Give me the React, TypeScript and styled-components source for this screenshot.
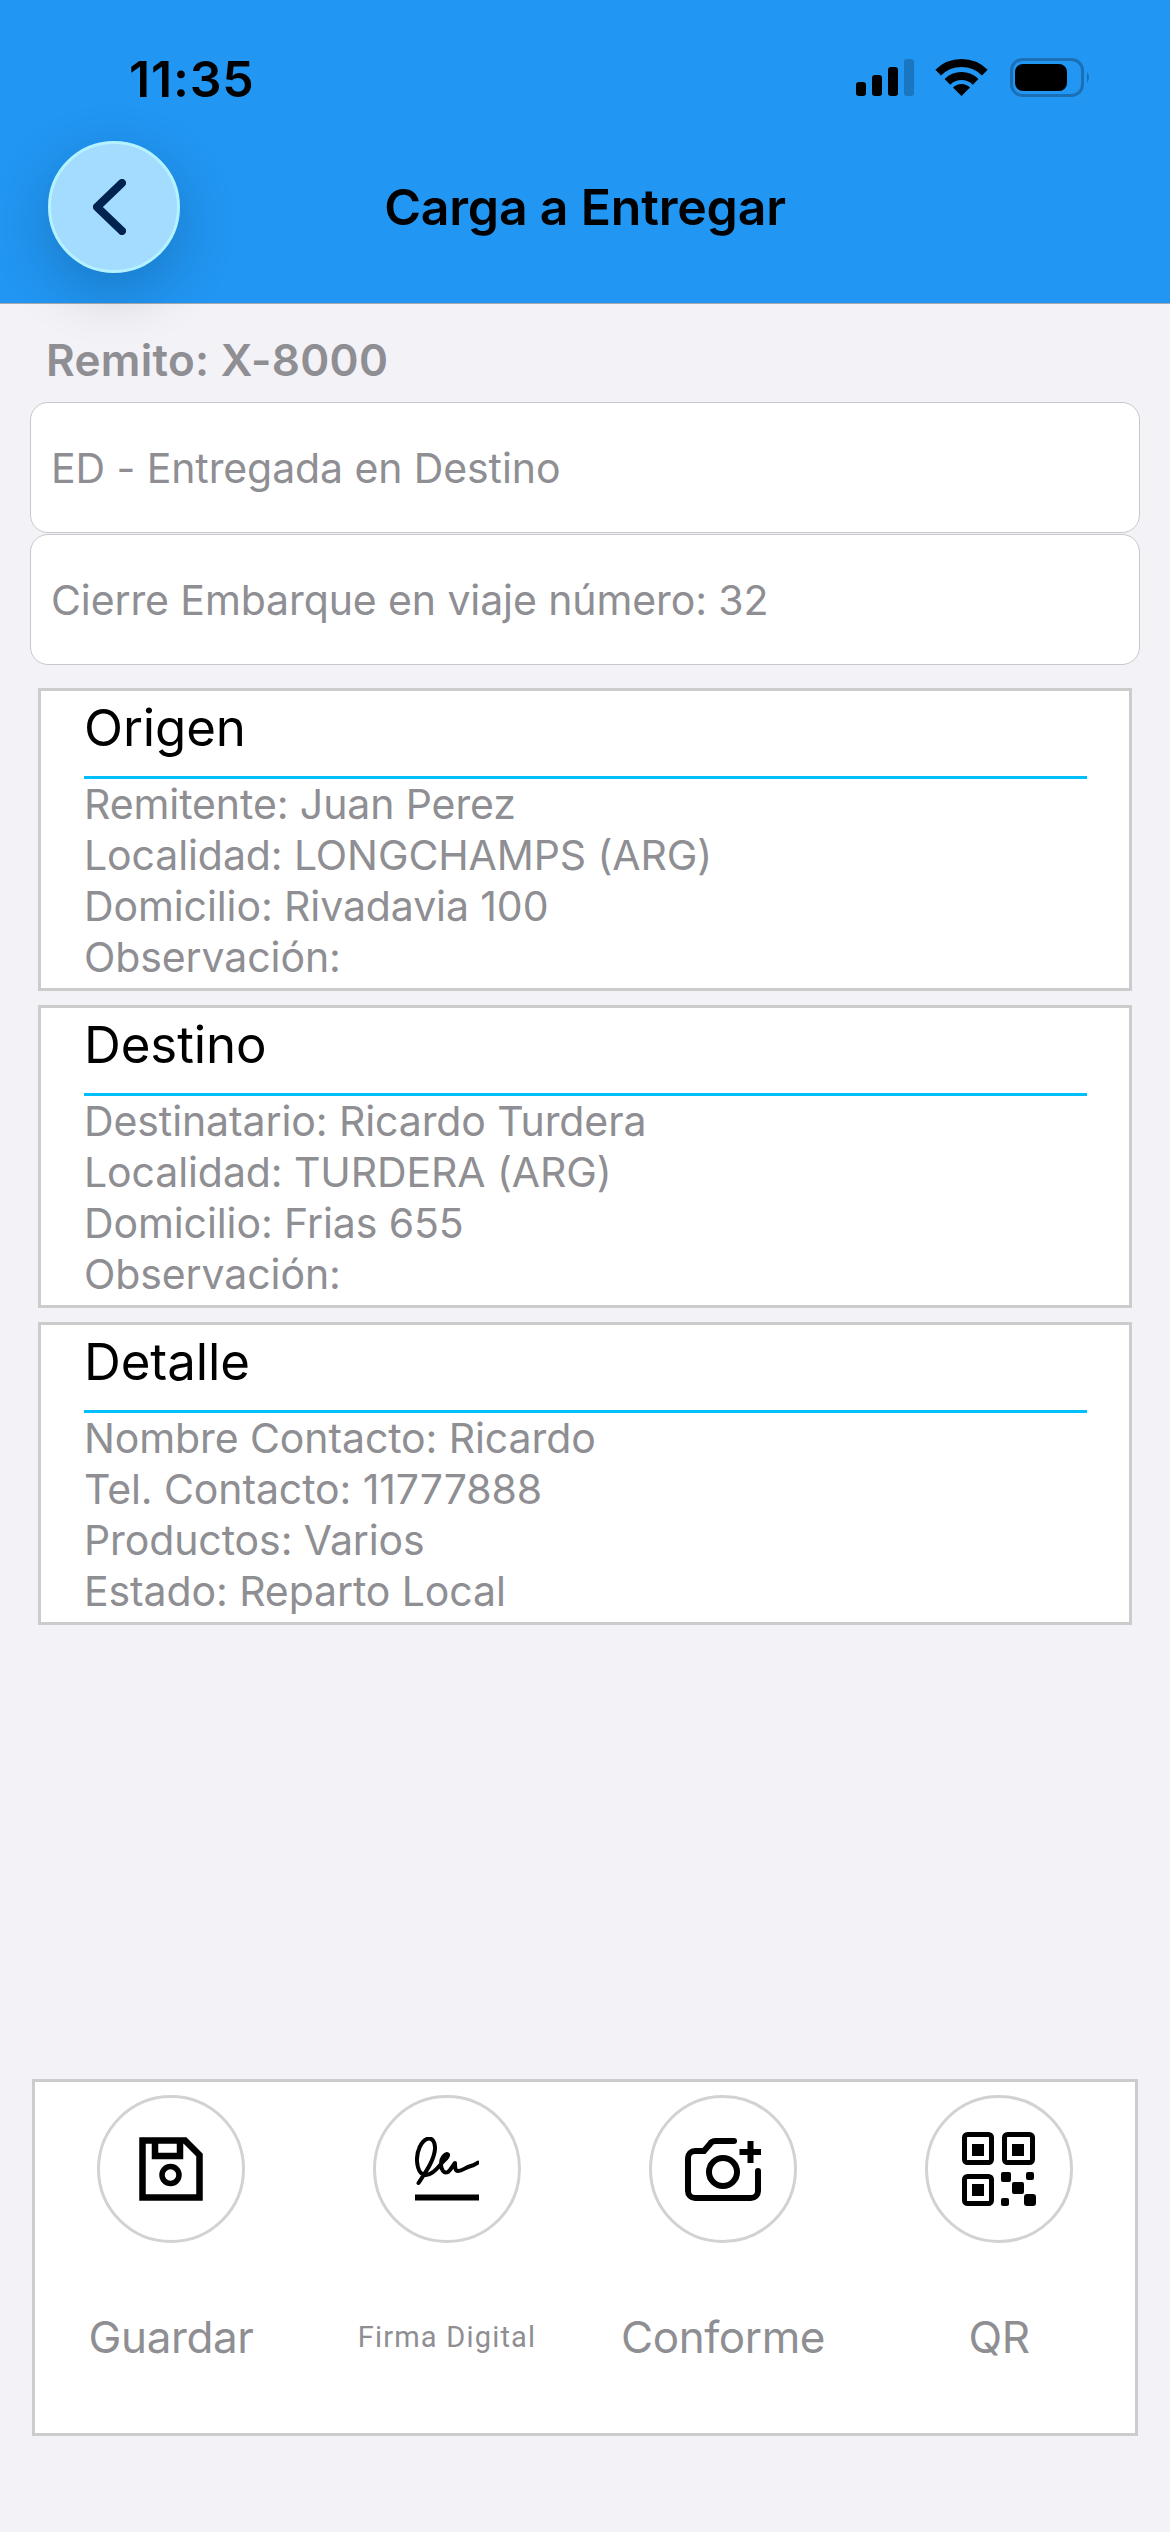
import React from "react";
import styled, { createGlobalStyle } from "styled-components";

const Global = createGlobalStyle`
  html, body { margin: 0; padding: 0; background: #f2f2f7; }
  * { box-sizing: border-box; }
  body { font-family: Inter, "Liberation Sans", sans-serif; }
`;

const Page = styled.div`
  width: 1170px;
  height: 2532px;
  display: flex;
  flex-direction: column;
  background: #f2f2f7;
  overflow: hidden;
`;

const Header = styled.header`
  height: 304px;
  flex: none;
  background: #2196f3;
  border-bottom: 1px solid #a9a9ad;
  position: relative;
  z-index: 2;
`;

const StatusBar = styled.div`
  height: 141px;
  padding: 51px 0 0 129px;
  display: flex;
  justify-content: space-between;
  align-items: flex-start;
`;

const Time = styled.span`
  font-size: 50px;
  line-height: 56px;
  font-weight: 600;
  letter-spacing: 0.8px;
  color: #000;
`;

const StatusIcons = styled.svg`
  width: 250px;
  height: 50px;
  margin: 4px 80px 0 0;
`;

const NavRow = styled.div`
  display: grid;
  grid-template-columns: 1fr auto 1fr;
  align-items: center;
  padding-left: 48px;
`;

const BackButton = styled.button`
  width: 132px;
  height: 132px;
  padding: 0 9px 0 0;
  border-radius: 50%;
  border: 3px solid #b4f2ff;
  background: #a4dcff;
  box-shadow: 0 18px 60px rgba(0, 0, 0, 0.2);
  display: flex;
  align-items: center;
  justify-content: center;
`;

const Title = styled.h1`
  margin: 0 0 0 -48px;
  font-size: 50px;
  line-height: 60px;
  font-weight: 600;
  letter-spacing: -0.2px;
  color: #000;
  white-space: nowrap;
`;

const Remito = styled.div`
  padding: 28px 0 0 46px;
  height: 98px;
  font-size: 44px;
  line-height: 56px;
  font-weight: 600;
  letter-spacing: 0.3px;
  color: #8e8e93;
`;

const InfoCards = styled.div`
  margin: 0 30px;
  display: flex;
  flex-direction: column;
  gap: 1px;
`;

const InfoCard = styled.div`
  height: 131px;
  padding-left: 20px;
  display: flex;
  align-items: center;
  background: #fff;
  border: 1px solid #c8c8cc;
  border-radius: 18px;
  font-size: 41px;
  letter-spacing: -0.1px;
  color: #8e8e93;
`;

const Sections = styled.div`
  margin: 23px 38px 0;
  display: flex;
  flex-direction: column;
  gap: 14px;
`;

const Section = styled.section`
  height: 303px;
  padding: 0 42px 0 43px;
  background: #fff;
  border: 3px solid #cccccc;
`;

const SectionTitle = styled.h2`
  margin: 0;
  height: 88px;
  padding-top: 7px;
  border-bottom: 3px solid #00bfff;
  font-size: 51px;
  line-height: 60px;
  font-weight: 400;
  letter-spacing: -0.1px;
  color: #000;
`;

const SectionLine = styled.div`
  font-size: 41px;
  line-height: 51px;
  letter-spacing: -0.1px;
  color: #8e8e93;
  white-space: nowrap;
`;

const Spacer = styled.div`
  flex: 1;
`;

const ActionPanel = styled.div`
  margin: 0 32px 96px;
  height: 357px;
  padding: 13px 0 0;
  background: #fff;
  border: 3px solid #cccccc;
  display: grid;
  grid-template-columns: repeat(4, 276px);
  justify-content: center;
`;

const Action = styled.div`
  display: flex;
  flex-direction: column;
  align-items: center;
`;

const ActionCircle = styled.div`
  width: 148px;
  height: 148px;
  border-radius: 50%;
  border: 3px solid #d2d2d2;
  background: #fff;
  display: flex;
  align-items: center;
  justify-content: center;
`;

const ActionLabel = styled.div<{ $small?: boolean }>`
  margin-top: 62px;
  height: 64px;
  display: flex;
  align-items: center;
  font-size: ${(p) => (p.$small ? "29px" : "44px")};
  letter-spacing: ${(p) => (p.$small ? "1.2px" : "-0.4px")};
  font-family: ${(p) => (p.$small ? "Roboto, Inter, sans-serif" : "inherit")};
  color: #8e8e93;
  white-space: nowrap;
`;

const StatusGlyphs = () => (
  <StatusIcons viewBox="0 0 250 50">
    <rect x="16" y="27" width="10" height="14" rx="3" fill="#000" />
    <rect x="32" y="20" width="10" height="21" rx="3" fill="#000" />
    <rect x="48" y="12" width="10" height="29" rx="3" fill="#000" />
    <rect x="64" y="4" width="10" height="37" rx="3" fill="#1a76c0" />
    <path d="M98.2 17.7 A33 33 0 0 1 144.8 17.7" fill="none" stroke="#000" strokeWidth="8" />
    <path d="M107.4 26.9 A20 20 0 0 1 135.6 26.9" fill="none" stroke="#000" strokeWidth="8" />
    <path d="M121.5 41 L113 32.5 A12 12 0 0 1 130 32.5 Z" fill="#000" />
    <rect x="171.5" y="4.5" width="71" height="36" rx="11" fill="none" stroke="#1a6fb5" strokeWidth="3" />
    <rect x="175" y="9" width="52" height="27" rx="8" fill="#000" />
    <path d="M247 17 Q251 22 247 28 Z" fill="#1a6fb5" />
  </StatusIcons>
);

const SaveIcon = () => (
  <svg width="64" height="64" viewBox="0 0 64 64" fill="none" stroke="#000" strokeWidth="6.5">
    <path d="M3.5 3.5 H46 L60.5 18 V60.5 H3.5 Z" />
    <path d="M16 3.5 V19 H41 V3.5" />
    <circle cx="31.5" cy="38" r="8.5" strokeWidth="5.5" />
  </svg>
);

const SignatureIcon = () => (
  <svg width="64" height="64" viewBox="0 0 64 64" fill="none" stroke="#000" strokeLinecap="round" strokeLinejoin="round">
    <path
      d="M3.5 46 C10 36 19 24 20 12 C20.5 5 17 1 13.5 1.5 C6 3 1.5 15 2 24 C2.5 33 6 38 11 38 C17 38 22 32 26 27 C29 23 34 20 33 17.5 C31 16 26 20 26 27 C26 33 29 37 33 35 C36 33 38 28 40 26 C40 30 40 34 43 34 C47 34 50 31 53 30 C57 29 60 28 63 25.5"
      strokeWidth="4"
    />
    <path d="M0 60.5 H64" strokeWidth="6" strokeLinecap="butt" />
  </svg>
);

const CameraIcon = () => (
  <svg width="76" height="63" viewBox="0 0 76 63" fill="none" stroke="#000" strokeWidth="6">
    <path d="M49 3 H31 C28 3 26 4 25 6 L19 13 H10 C6 13 3 16 3 20 V53 C3 57 6 60 10 60 H66 C70 60 73 57 73 53 V33" strokeLinecap="round" />
    <circle cx="38" cy="34" r="14" />
    <path d="M65.5 3 V25 M54.5 14 H76" />
  </svg>
);

const QrIcon = () => (
  <svg width="76" height="76" viewBox="0 0 76 76" fill="#000">
    <g fill="none" stroke="#000" strokeWidth="5">
      <rect x="3.5" y="3.5" width="27" height="28" rx="3" />
      <rect x="43.5" y="3.5" width="28" height="28" rx="3" />
      <rect x="3.5" y="45.5" width="27" height="27" rx="3" />
    </g>
    <rect x="11" y="13" width="12" height="12" />
    <rect x="51" y="13" width="12" height="12" />
    <rect x="11" y="53" width="12" height="12" />
    <rect x="40" y="41" width="10" height="10" rx="2" />
    <rect x="65" y="41" width="8" height="8" rx="2" />
    <rect x="51" y="51" width="12" height="12" rx="2" />
    <rect x="40" y="67" width="8" height="8" rx="2" />
    <rect x="63" y="63" width="12" height="12" rx="3" />
  </svg>
);

const sections = [
  {
    title: "Origen",
    lines: ["Remitente: Juan Perez", "Localidad: LONGCHAMPS (ARG)", "Domicilio: Rivadavia 100", "Observación:"],
  },
  {
    title: "Destino",
    lines: ["Destinatario: Ricardo Turdera", "Localidad: TURDERA (ARG)", "Domicilio: Frias 655", "Observación:"],
  },
  {
    title: "Detalle",
    lines: ["Nombre Contacto: Ricardo", "Tel. Contacto: 11777888", "Productos: Varios", "Estado: Reparto Local"],
  },
];

const actions = [
  { label: "Guardar", icon: <SaveIcon /> },
  { label: "Firma Digital", icon: <SignatureIcon />, small: true },
  { label: "Conforme", icon: <CameraIcon /> },
  { label: "QR", icon: <QrIcon /> },
];

export default function App() {
  return (
    <Page>
      <Global />
      <Header>
        <StatusBar>
          <Time>11:35</Time>
          <StatusGlyphs />
        </StatusBar>
        <NavRow>
          <BackButton aria-label="Volver">
            <svg width="33" height="56" viewBox="0 0 33 56" fill="none" stroke="#00234f" strokeWidth="8" strokeLinecap="round" strokeLinejoin="round">
              <path d="M29 4 L4 28 L29 52" />
            </svg>
          </BackButton>
          <Title>Carga a Entregar</Title>
          <span />
        </NavRow>
      </Header>
      <Remito>Remito: X-8000</Remito>
      <InfoCards>
        <InfoCard>ED - Entregada en Destino</InfoCard>
        <InfoCard>Cierre Embarque en viaje número: 32</InfoCard>
      </InfoCards>
      <Sections>
        {sections.map((s) => (
          <Section key={s.title}>
            <SectionTitle>{s.title}</SectionTitle>
            {s.lines.map((l) => (
              <SectionLine key={l}>{l}</SectionLine>
            ))}
          </Section>
        ))}
      </Sections>
      <Spacer />
      <ActionPanel>
        {actions.map((a) => (
          <Action key={a.label}>
            <ActionCircle>{a.icon}</ActionCircle>
            <ActionLabel $small={a.small}>{a.label}</ActionLabel>
          </Action>
        ))}
      </ActionPanel>
    </Page>
  );
}
